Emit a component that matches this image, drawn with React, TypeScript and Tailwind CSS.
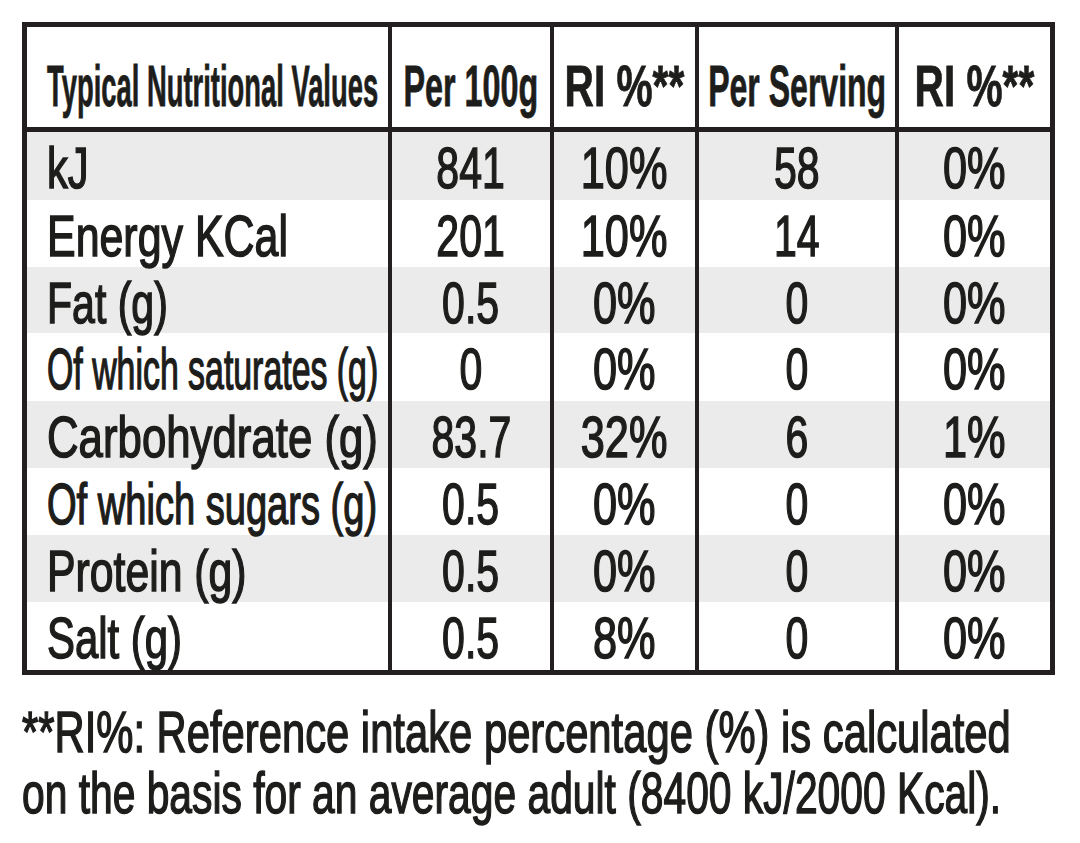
import React from 'react';

interface NutrientRow {
  label: string;
  labelScale: string;
  per100: string;
  ri: string;
  serving: string;
  riServing: string;
  height: string;
  shaded: boolean;
}

const rows: NutrientRow[] = [
  {label: 'kJ', labelScale: 'scale-x-[0.73]', per100: '841', ri: '10%', serving: '58', riServing: '0%', height: 'h-[68px]', shaded: true},
  {label: 'Energy KCal', labelScale: 'scale-x-[0.753]', per100: '201', ri: '10%', serving: '14', riServing: '0%', height: 'h-[67px]', shaded: false},
  {label: 'Fat (g)', labelScale: 'scale-x-[0.72]', per100: '0.5', ri: '0%', serving: '0', riServing: '0%', height: 'h-[66px]', shaded: true},
  {label: 'Of which saturates (g)', labelScale: 'scale-x-[0.594]', per100: '0', ri: '0%', serving: '0', riServing: '0%', height: 'h-[68px]', shaded: false},
  {label: 'Carbohydrate (g)', labelScale: 'scale-x-[0.768]', per100: '83.7', ri: '32%', serving: '6', riServing: '1%', height: 'h-[67px]', shaded: true},
  {label: 'Of which sugars (g)', labelScale: 'scale-x-[0.668]', per100: '0.5', ri: '0%', serving: '0', riServing: '0%', height: 'h-[67px]', shaded: false},
  {label: 'Protein (g)', labelScale: 'scale-x-[0.75]', per100: '0.5', ri: '0%', serving: '0', riServing: '0%', height: 'h-[67px]', shaded: true},
  {label: 'Salt (g)', labelScale: 'scale-x-[0.735]', per100: '0.5', ri: '8%', serving: '0', riServing: '0%', height: 'h-[68px]', shaded: false},
];

const font = "font-['Liberation_Sans',Arial,sans-serif]";

export default function App() {
  return (
    <div className={`min-h-[843px] w-[1080px] bg-white pl-[22px] pt-[22px] text-[#1d1d1b] ${font}`}>
      <div className="w-[1033px] border-[5px] border-[#231f20]">
        <HeaderRow />
        {rows.map(row => (
          <BodyRow key={row.label} row={row} />
        ))}
      </div>
      <Footnote />
    </div>
  );
}

function HeaderRow() {
  return (
    <div className="flex h-[105px] border-b-[5px] border-[#231f20] bg-white text-[58px] font-bold leading-none [-webkit-text-stroke:0.8px_#1d1d1b]">
      <div className="flex w-[361px] items-start overflow-visible pl-[20px] pt-[30px]">
        <span className="inline-block origin-left scale-x-[0.472] whitespace-nowrap">
          Typical Nutritional Values
        </span>
      </div>
      <HeaderCell width="w-[162px]" scale="scale-x-[0.558]">
        Per 100g
      </HeaderCell>
      <HeaderCell width="w-[145px]" scale="scale-x-[0.70]">
        RI %**
      </HeaderCell>
      <HeaderCell width="w-[200px]" scale="scale-x-[0.552]">
        Per Serving
      </HeaderCell>
      <HeaderCell width="w-[155px]" scale="scale-x-[0.70]">
        RI %**
      </HeaderCell>
    </div>
  );
}

interface HeaderCellProps {
  width: string;
  scale: string;
  children: React.ReactNode;
}
function HeaderCell({width, scale, children}: HeaderCellProps) {
  return (
    <div
      className={`flex ${width} items-start justify-center border-l-[4px] border-[#231f20] pt-[30px]`}
    >
      <span className={`inline-block origin-center whitespace-nowrap ${scale}`}>
        {children}
      </span>
    </div>
  );
}

function BodyRow({row}: {row: NutrientRow}) {
  return (
    <div
      className={`flex ${row.height} text-[57px] leading-none [-webkit-text-stroke:1.5px_#1d1d1b] ${
        row.shaded ? 'bg-[#ebebeb]' : 'bg-white'
      }`}
    >
      <div className="flex w-[361px] items-start pl-[20px] pt-[8px]">
        <span className={`inline-block origin-left whitespace-nowrap ${row.labelScale}`}>
          {row.label}
        </span>
      </div>
      <ValueCell width="w-[162px]" scale="scale-x-[0.72]">
        {row.per100}
      </ValueCell>
      <ValueCell width="w-[145px]" scale="scale-x-[0.76]">
        {row.ri}
      </ValueCell>
      <ValueCell width="w-[200px]" scale="scale-x-[0.72]">
        {row.serving}
      </ValueCell>
      <ValueCell width="w-[155px]" scale="scale-x-[0.76]">
        {row.riServing}
      </ValueCell>
    </div>
  );
}

function ValueCell({width, scale, children}: HeaderCellProps) {
  return (
    <div
      className={`flex ${width} items-start justify-center border-l-[4px] border-[#231f20] pt-[8px]`}
    >
      <span className={`inline-block origin-center whitespace-nowrap ${scale}`}>
        {children}
      </span>
    </div>
  );
}

function Footnote() {
  return (
    <div className="mt-[26px] text-[58px] leading-[61px] [-webkit-text-stroke:1.5px_#1d1d1b]">
      <div className="origin-left scale-x-[0.72] whitespace-nowrap">
        **RI%: Reference intake percentage (%) is calculated
      </div>
      <div className="origin-left scale-x-[0.703] whitespace-nowrap">
        on the basis for an average adult (8400 kJ/2000 Kcal).
      </div>
    </div>
  );
}
